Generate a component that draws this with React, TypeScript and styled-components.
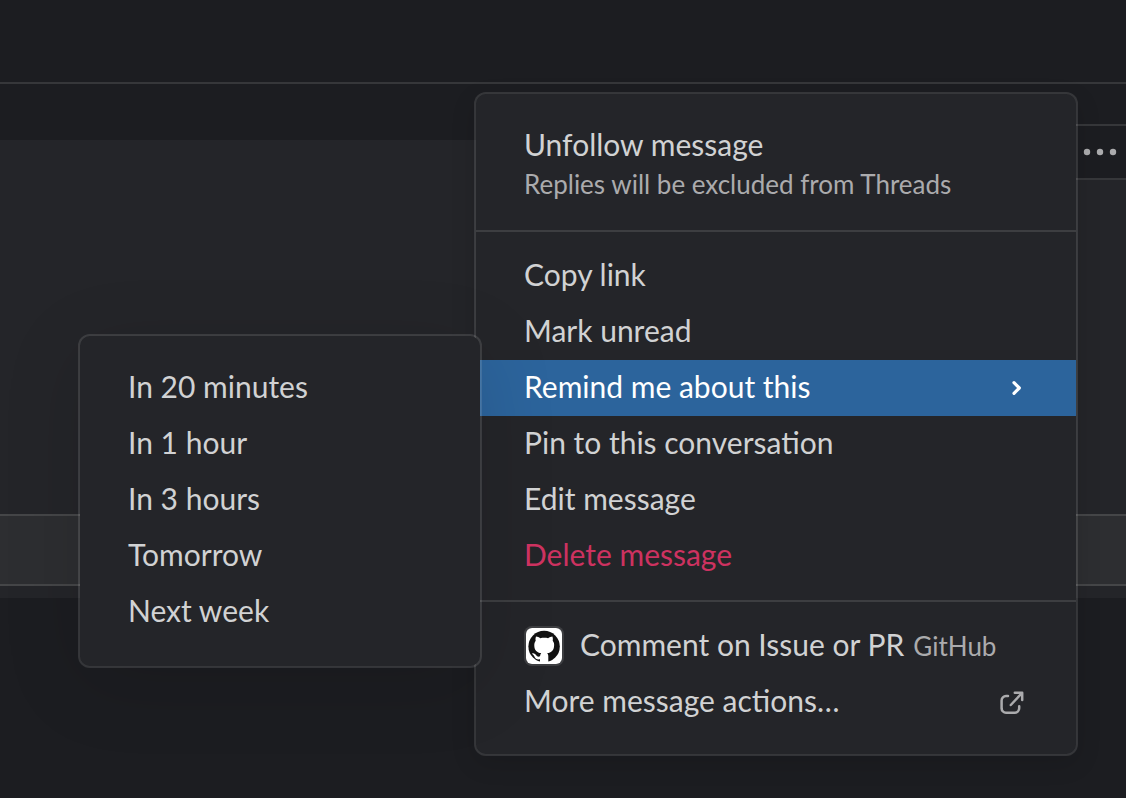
import React from "react";
import styled, { createGlobalStyle } from "styled-components";

const color = {
  page: "#1c1d21",
  surface: "#242529",
  raised: "#2d2e31",
  line: "rgba(232, 232, 232, 0.13)",
  text: "#d1d2d3",
  muted: "#ababad",
  accent: "#2c649c",
  danger: "#cd3260",
};

const GlobalStyle = createGlobalStyle`
  *, *::before, *::after { box-sizing: border-box; }
  body {
    margin: 0;
    background: ${color.page};
    color: ${color.text};
    font-family: Lato, "Open Sans", sans-serif;
    font-size: 30px;
    line-height: 40px;
  }
`;

const Page = styled.div`
  position: relative;
  min-height: 100vh;
  overflow: hidden;
`;

const Header = styled.header`
  height: 84px;
  border-bottom: 2px solid ${color.line};
`;

const Conversation = styled.main`
  padding-top: 56px;
`;

const Message = styled.article`
  position: relative;
  padding: 374px 0 12px;
  background: ${color.surface};
`;

const ReplyBar = styled.div`
  height: 72px;
  background: ${color.raised};
  border: solid ${color.line};
  border-width: 2px 0;
`;

const Toolbar = styled.div`
  position: absolute;
  top: -16px;
  right: 0;
  display: flex;
  justify-content: flex-end;
  width: 120px;
  height: 56px;
  background: ${color.page};
  border: solid ${color.line};
  border-width: 2px 0;
`;

const IconButton = styled.button`
  display: grid;
  place-items: center;
  width: 52px;
  padding: 0;
  border: 0;
  background: none;
  color: ${color.muted};
`;

const panel = `
  position: absolute;
  margin: 0;
  background: ${color.surface};
  background-clip: padding-box;
  border: 2px solid ${color.line};
  border-radius: 12px;
  list-style: none;
`;

const Menu = styled.div`
  ${panel}
  top: 92px;
  right: 48px;
  width: 604px;
  padding: 24px 0;
  box-shadow: 0 8px 24px rgba(0, 0, 0, 0.12);
`;

const Submenu = styled.ul`
  ${panel}
  top: -26px;
  right: calc(100% - 6px);
  width: 404px;
  padding: 24px 0 26px;
  box-shadow: 0 16px 80px rgba(0, 0, 0, 0.12);
`;

const Group = styled.ul`
  margin: 0;
  padding: 0;
  list-style: none;

  & + & {
    margin-top: 16px;
    padding-top: 16px;
    border-top: 2px solid ${color.line};
  }
`;

const Entry = styled.li`
  position: relative;
`;

const Item = styled.button<{ $tone?: "active" | "danger" }>`
  display: flex;
  align-items: center;
  width: 100%;
  min-height: 56px;
  padding: 0 52px 0 48px;
  border: 0;
  background: ${(p) => (p.$tone === "active" ? color.accent : "none")};
  color: ${(p) =>
    p.$tone === "active" ? "#fff" : p.$tone === "danger" ? color.danger : color.text};
  font: inherit;
  text-align: left;
  white-space: nowrap;
`;

const StackedItem = styled(Item)`
  flex-direction: column;
  align-items: flex-start;
  padding-top: 6px;
  padding-bottom: 10px;
`;

const Label = styled.span`
  flex: 1;
  padding-bottom: 4px;
`;

const Hint = styled.span`
  color: ${color.muted};
  font-size: 26px;
`;

const AppIcon = styled.span`
  display: block;
  width: 40px;
  height: 40px;
  margin-right: 16px;
  overflow: hidden;
  background: #fff;
  background-clip: padding-box;
  border: 2px solid ${color.line};
  border-radius: 8px;

  svg { display: block; }
`;

const AppName = styled.span`
  margin-left: 9px;
  color: ${color.muted};
  font-size: 26px;
  line-height: 32px;
`;

const Trailing = styled.span`
  display: flex;
  color: ${color.muted};
`;

const Chevron = styled(Trailing)`
  color: #fff;
`;

const reminders = ["In 20 minutes", "In 1 hour", "In 3 hours", "Tomorrow", "Next week"];

const DotsIcon = () => (
  <svg width="36" height="8" viewBox="0 0 36 8" fill="currentColor" aria-hidden="true">
    <circle cx="5" cy="4" r="3.2" />
    <circle cx="18" cy="4" r="3.2" />
    <circle cx="31" cy="4" r="3.2" />
  </svg>
);

const ChevronIcon = () => (
  <svg width="16" height="16" viewBox="0 0 16 16" fill="none" stroke="currentColor" strokeWidth="3.2" strokeLinecap="round" strokeLinejoin="round" aria-hidden="true">
    <path d="M6 2.700 11.300 8 6 13.300" />
  </svg>
);

const ExternalIcon = () => (
  <svg width="24" height="24" viewBox="0 0 24 24" fill="none" stroke="currentColor" strokeWidth="2.5" strokeLinecap="round" strokeLinejoin="round" aria-hidden="true">
    <path d="M8 6H6A4.400 4.400 0 0 0 1.600 10.400v8A4.400 4.400 0 0 0 6 22.700h8.800a4.400 4.400 0 0 0 4.400-4.400v-2" />
    <path d="M14.800 2.800h7.400v7.200M22 3 10.800 15" />
  </svg>
);

const GitHubIcon = () => (
  <svg width="36" height="36" viewBox="0 0 36 36" aria-hidden="true">
    <circle cx="18.100" cy="18.500" r="15.700" fill="#111" />
    <path
      fill="#fff"
      d="M10 8.600C11.400 8.600 13 9.400 14.300 10.200C16.700 9.600 19.700 9.600 22.100 10.200C23.400 9.400 25 8.600 26.400 8.600C27 10.200 27 11.600 26.700 12.700C27.900 14.200 28.300 15.700 28.100 17.900C27.800 22.300 25.400 24.500 21.200 25.100C21.900 25.900 22.300 26.900 22.300 28.300V36H14V31.300C11 31.800 9.300 30.600 8.400 28.400C7.900 27.200 7.200 26.500 6.300 25.900C5.900 25.500 6.300 25.200 7 25.200C8.500 25.200 9.500 26.300 10.200 27.300C11.200 28.800 12.500 28.900 14 28.300C14.100 26.900 14.600 25.900 15.200 25.100C11 24.500 8.500 22.300 8.300 17.900C8.200 15.700 8.600 14.200 9.700 12.700C9.400 11.600 9.400 10.200 10 8.600Z"
    />
  </svg>
);

export default function App() {
  return (
    <>
      <GlobalStyle />
      <Page>
        <Header />
        <Conversation>
          <Message>
            <ReplyBar />
            <Toolbar>
              <IconButton type="button" aria-label="More actions">
                <DotsIcon />
              </IconButton>
            </Toolbar>
          </Message>
        </Conversation>

        <Menu>
          <Group>
            <Entry>
              <StackedItem type="button">
                <span>Unfollow message</span>
                <Hint>Replies will be excluded from Threads</Hint>
              </StackedItem>
            </Entry>
          </Group>
          <Group>
            <Entry><Item type="button"><Label>Copy link</Label></Item></Entry>
            <Entry><Item type="button"><Label>Mark unread</Label></Item></Entry>
            <Entry>
              <Item type="button" $tone="active" aria-haspopup="true" aria-expanded="true">
                <Label>Remind me about this</Label>
                <Chevron><ChevronIcon /></Chevron>
              </Item>
              <Submenu>
                {reminders.map((name) => (
                  <Entry key={name}><Item type="button"><Label>{name}</Label></Item></Entry>
                ))}
              </Submenu>
            </Entry>
            <Entry><Item type="button"><Label>Pin to this conversation</Label></Item></Entry>
            <Entry><Item type="button"><Label>Edit message</Label></Item></Entry>
            <Entry><Item type="button" $tone="danger"><Label>Delete message</Label></Item></Entry>
          </Group>
          <Group>
            <Entry>
              <Item type="button">
                <AppIcon><GitHubIcon /></AppIcon>
                <Label>
                  Comment on Issue or PR
                  <AppName>GitHub</AppName>
                </Label>
              </Item>
            </Entry>
            <Entry>
              <Item type="button">
                <Label>More message actions…</Label>
                <Trailing><ExternalIcon /></Trailing>
              </Item>
            </Entry>
          </Group>
        </Menu>
      </Page>
    </>
  );
}
